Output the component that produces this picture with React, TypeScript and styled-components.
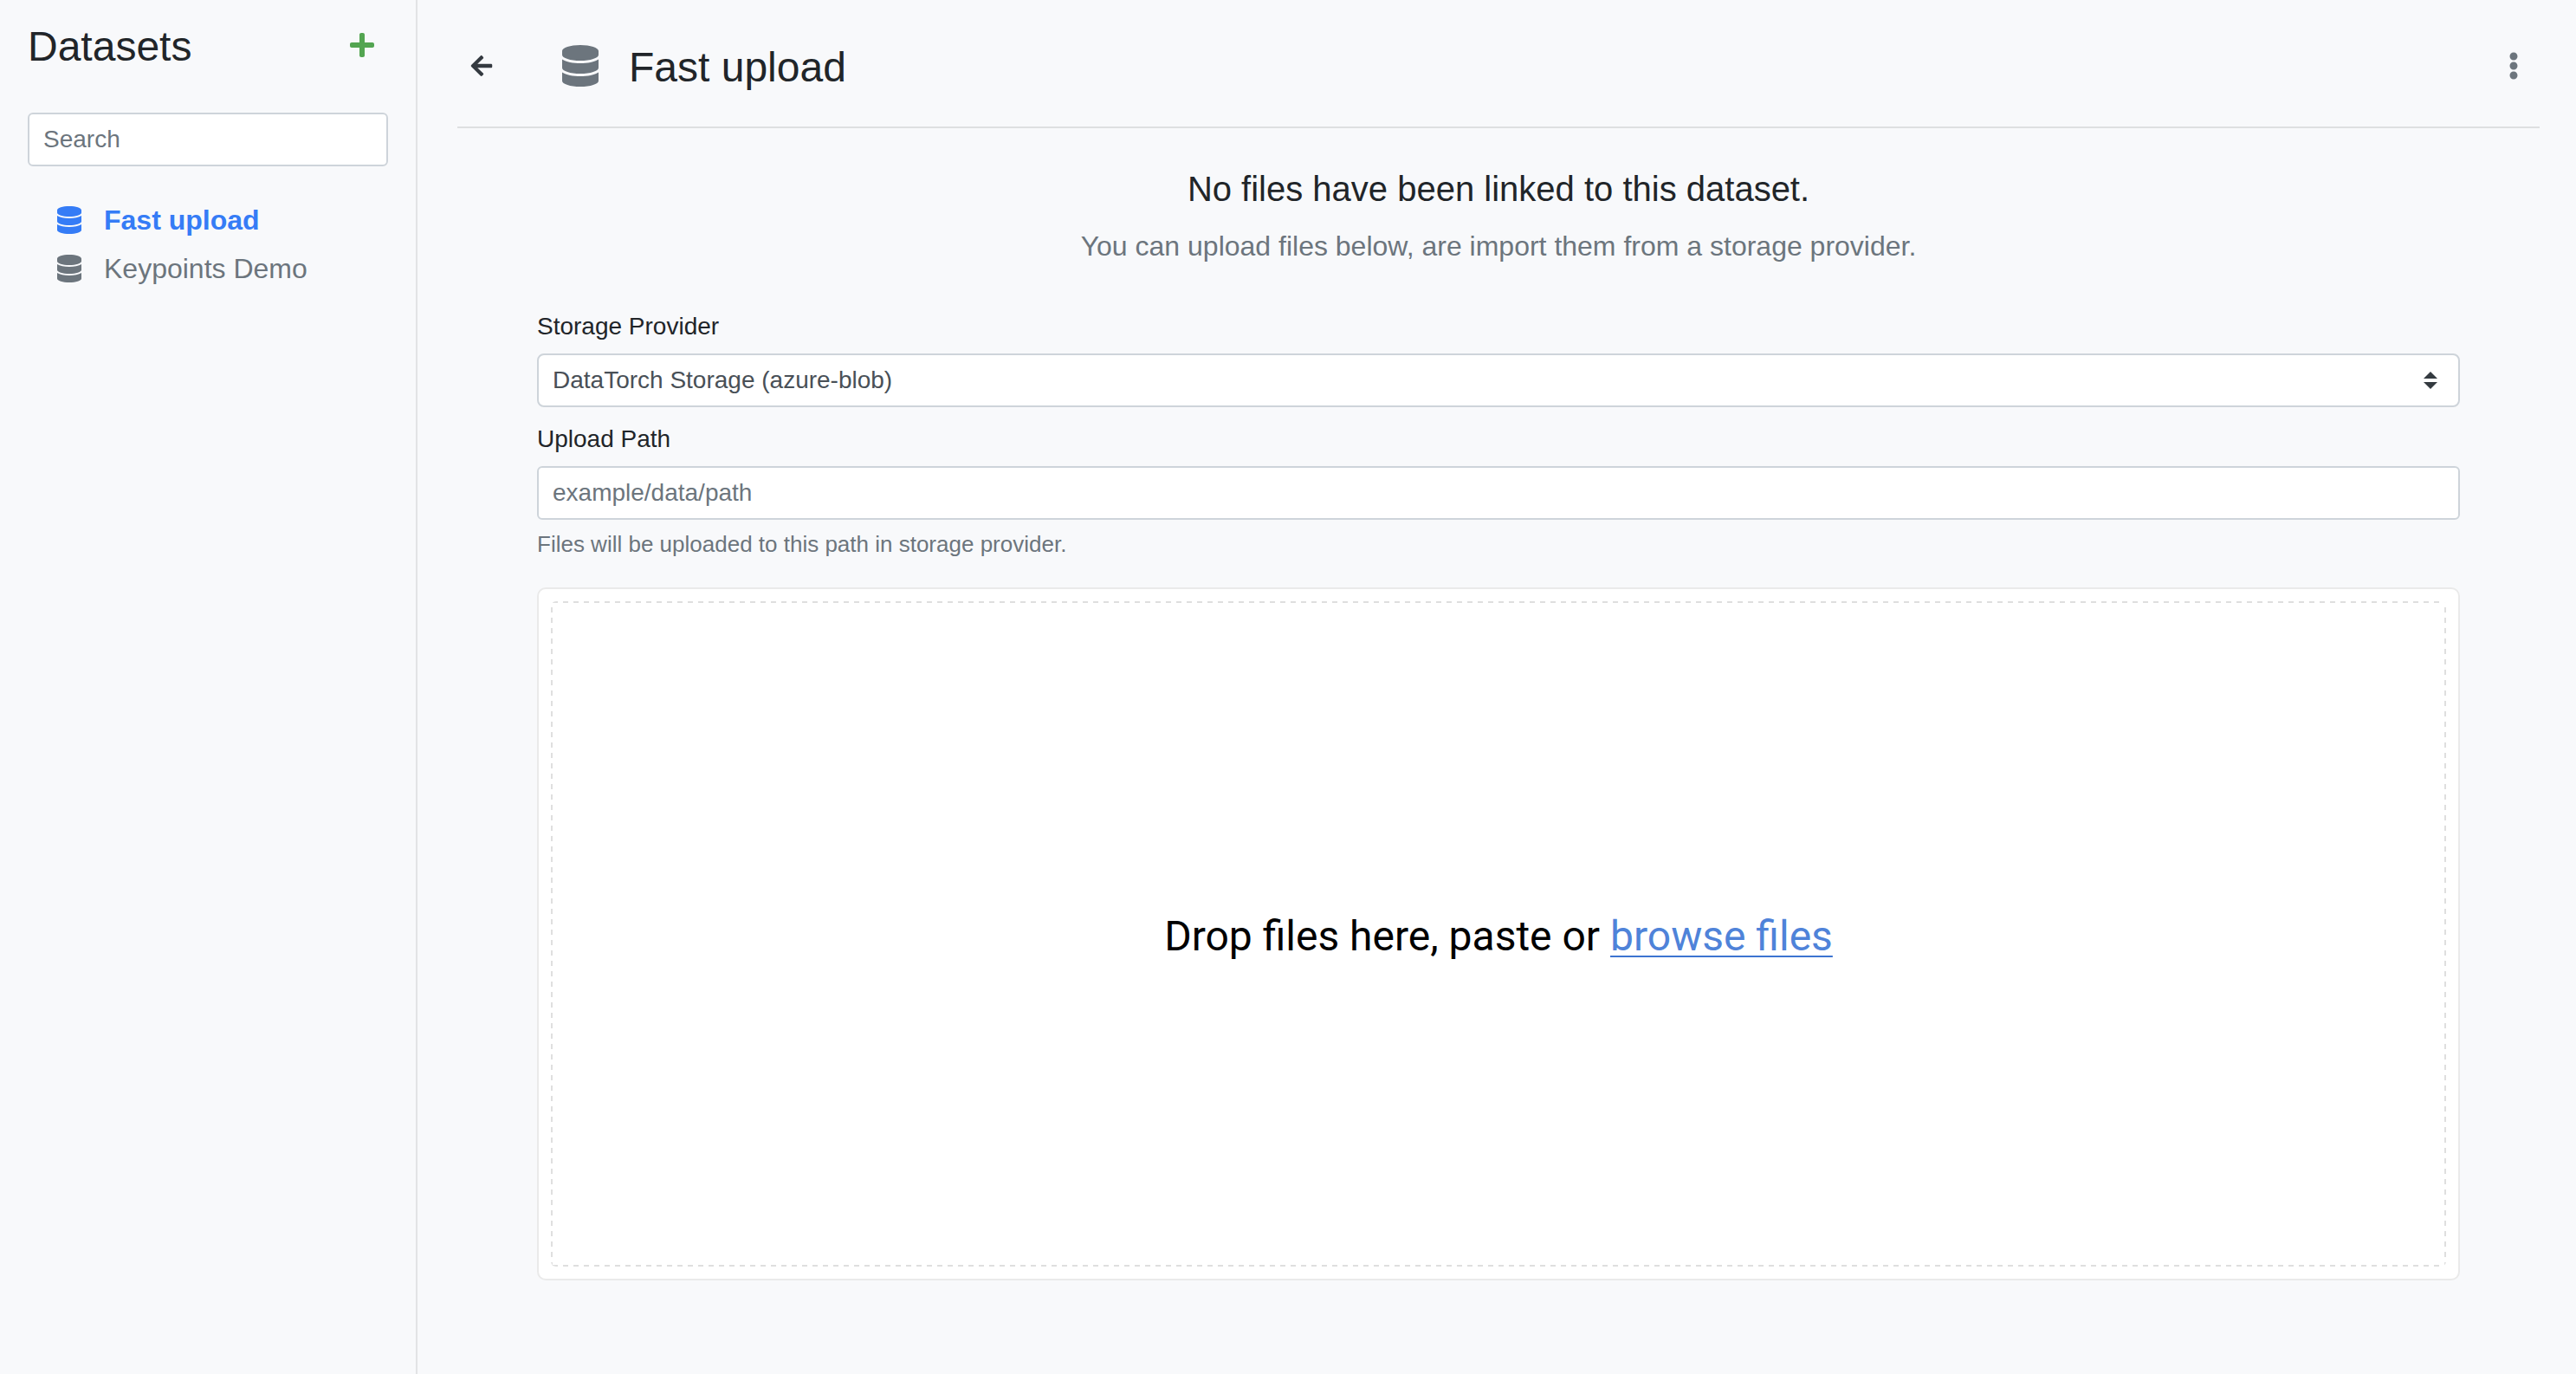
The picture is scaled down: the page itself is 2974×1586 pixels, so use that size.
import React, { useState } from 'react';
import styled, { createGlobalStyle } from 'styled-components';
import { FaArrowLeft, FaDatabase, FaEllipsisV, FaPlus } from 'react-icons/fa';

const sans = '"Liberation Sans", Arial, sans-serif';

const color = {
  page: '#f8f9fb',
  text: '#212529',
  dark: '#343a40',
  input: '#495057',
  muted: '#6c757d',
  control: '#ced4da',
  line: '#dee0e1',
  sideLine: '#e2e3e5',
  dash: '#dfdfdf',
  primary: '#357cf6',
  success: '#53a551',
  link: '#4f83d9',
};

const GlobalStyle = createGlobalStyle`
  *, *::before, *::after { box-sizing: border-box; }
  body {
    margin: 0;
    background: ${color.page};
    color: ${color.text};
    font-family: ${sans};
    font-size: 32px;
    line-height: 48px;
  }
  h1, h2, h3, p { margin: 0; font-weight: 400; }
  button { padding: 0; border: 0; background: none; cursor: pointer; font: inherit; }
`;

const Layout = styled.div`
  display: grid;
  grid-template-columns: 482px minmax(0, 1fr);
  min-height: 100vh;
`;

const Sidebar = styled.aside`
  padding: 24px 32px;
  border-right: 2px solid ${color.sideLine};
`;

const SidebarHeader = styled.div`
  display: flex;
  align-items: flex-start;
  justify-content: space-between;
  padding-right: 16px;
  margin-bottom: 46px;
`;

const Title = styled.h1`
  font-size: 48px;
  line-height: 60px;
`;

const IconButton = styled.button<{ $width: number; $color: string }>`
  display: flex;
  align-items: center;
  justify-content: center;
  width: ${(p) => p.$width}px;
  height: 56px;
  color: ${(p) => p.$color};
`;

const TextInput = styled.input`
  display: block;
  width: 100%;
  height: 62px;
  padding: 0 16px;
  border: 2px solid ${color.control};
  border-radius: 6px;
  background: #fff;
  color: ${color.input};
  font-family: ${sans};
  font-size: 28px;
  line-height: 42px;

  &::placeholder {
    color: ${color.muted};
    opacity: 1;
  }
`;

const DatasetList = styled.nav`
  display: flex;
  flex-direction: column;
  padding: 34px 0 0 28px;
`;

const DatasetLink = styled.a<{ $active?: boolean }>`
  display: flex;
  align-items: center;
  gap: 20px;
  line-height: 56px;
  color: ${(p) => (p.$active ? color.primary : color.muted)};
  font-weight: ${(p) => (p.$active ? 700 : 400)};
  text-decoration: none;
`;

const IconSlot = styled.span<{ $width: number }>`
  display: flex;
  align-items: center;
  justify-content: center;
  width: ${(p) => p.$width}px;
  height: 56px;
  color: ${(p) => (p.$width > 40 ? color.muted : 'inherit')};
`;

const Main = styled.main`
  padding: 0 42px 0 46px;
`;

const Header = styled.header`
  display: flex;
  align-items: flex-start;
  padding: 48px 0 38px;
  border-bottom: 2px solid ${color.line};
`;

const HeaderTitle = styled.div`
  display: flex;
  flex: 1;
  align-items: flex-start;
  gap: 26px;
  margin-left: 56px;
`;

const EmptyMessage = styled.section`
  display: flex;
  flex-direction: column;
  gap: 18px;
  padding: 46px 0 48px;
  text-align: center;
`;

const EmptyTitle = styled.h2`
  font-size: 40px;
  line-height: 48px;
`;

const EmptyHint = styled.p`
  color: ${color.muted};
`;

const UploadForm = styled.form`
  display: flex;
  flex-direction: column;
  gap: 16px;
  padding: 0 92px;
`;

const Label = styled.label`
  display: block;
  margin-bottom: 10px;
  font-size: 28px;
  line-height: 42px;
`;

const SelectBox = styled.div`
  display: grid;
  align-items: center;

  > * { grid-area: 1 / 1; }
  > svg {
    justify-self: end;
    margin-right: 26px;
    pointer-events: none;
  }
`;

const Select = styled.select`
  appearance: none;
  width: 100%;
  height: 62px;
  padding: 0 56px 0 16px;
  border: 2px solid ${color.control};
  border-radius: 8px;
  background: #fff;
  color: ${color.input};
  font-family: ${sans};
  font-size: 28px;
  line-height: 42px;
`;

const HelpText = styled.p`
  margin-top: 8px;
  color: ${color.muted};
  font-size: 26px;
  line-height: 40px;
`;

const DropCard = styled.div`
  display: flex;
  min-height: 800px;
  margin-top: 14px;
  padding: 14px;
  border: 2px solid #eaeaea;
  border-radius: 10px;
  background: #fff;
`;

const dashes = (angle: number) =>
  `repeating-linear-gradient(${angle}deg, ${color.dash} 0 6px, transparent 6px 12px)`;

/* The outline is painted as four gradient strips to get even 6px dashes and gaps. */
const DropArea = styled.div`
  display: flex;
  flex: 1;
  align-items: center;
  justify-content: center;
  padding-top: 6px;
  border-radius: 6px;
  background:
    ${dashes(90)} 2px 0 / 100% 2px no-repeat,
    ${dashes(90)} 2px 100% / 100% 2px no-repeat,
    ${dashes(180)} 0 7px / 2px 100% no-repeat,
    ${dashes(180)} 100% 7px / 2px 100% no-repeat;
  color: #000;
  font-family: Roboto, sans-serif;
  font-size: 48px;
  line-height: 58px;
`;

const BrowseButton = styled.button`
  color: ${color.link};
  text-decoration: underline 2px #3d74d1;
  text-underline-offset: 6px;
  text-decoration-skip-ink: none;
`;

const datasets = ['Fast upload', 'Keypoints Demo'];

export default function App() {
  const [active, setActive] = useState(datasets[0]);

  return (
    <>
      <GlobalStyle />
      <Layout>
        <Sidebar>
          <SidebarHeader>
            <Title as="h2">Datasets</Title>
            <IconButton type="button" aria-label="Add dataset" $width={28} $color={color.success}>
              <FaPlus size={32} />
            </IconButton>
          </SidebarHeader>
          <TextInput type="text" placeholder="Search" aria-label="Search datasets" />
          <DatasetList>
            {datasets.map((name) => (
              <DatasetLink key={name} href="#" $active={name === active} onClick={() => setActive(name)}>
                <IconSlot $width={40}>
                  <FaDatabase size={32} />
                </IconSlot>
                {name}
              </DatasetLink>
            ))}
          </DatasetList>
        </Sidebar>

        <Main>
          <Header>
            <IconButton type="button" aria-label="Back" $width={56} $color={color.dark}>
              <FaArrowLeft size={28} />
            </IconButton>
            <HeaderTitle>
              <IconSlot $width={60}>
                <FaDatabase size={48} />
              </IconSlot>
              <Title>{active}</Title>
            </HeaderTitle>
            <IconButton type="button" aria-label="More options" $width={60} $color={color.muted}>
              <FaEllipsisV size={32} />
            </IconButton>
          </Header>

          <EmptyMessage>
            <EmptyTitle>No files have been linked to this dataset.</EmptyTitle>
            <EmptyHint>You can upload files below, are import them from a storage provider.</EmptyHint>
          </EmptyMessage>

          <UploadForm>
            <div>
              <Label htmlFor="provider">Storage Provider</Label>
              <SelectBox>
                <Select id="provider">
                  <option>DataTorch Storage (azure-blob)</option>
                </Select>
                <svg width="16" height="20" viewBox="0 0 4 5" fill={color.dark} aria-hidden="true">
                  <path d="M2 0L0 2h4zm0 5L0 3h4z" />
                </svg>
              </SelectBox>
            </div>
            <div>
              <Label htmlFor="path">Upload Path</Label>
              <TextInput id="path" type="text" placeholder="example/data/path" />
              <HelpText>Files will be uploaded to this path in storage provider.</HelpText>
            </div>
            <DropCard>
              <DropArea>
                <p>
                  Drop files here, paste or <BrowseButton type="button">browse files</BrowseButton>
                </p>
              </DropArea>
            </DropCard>
          </UploadForm>
        </Main>
      </Layout>
    </>
  );
}
